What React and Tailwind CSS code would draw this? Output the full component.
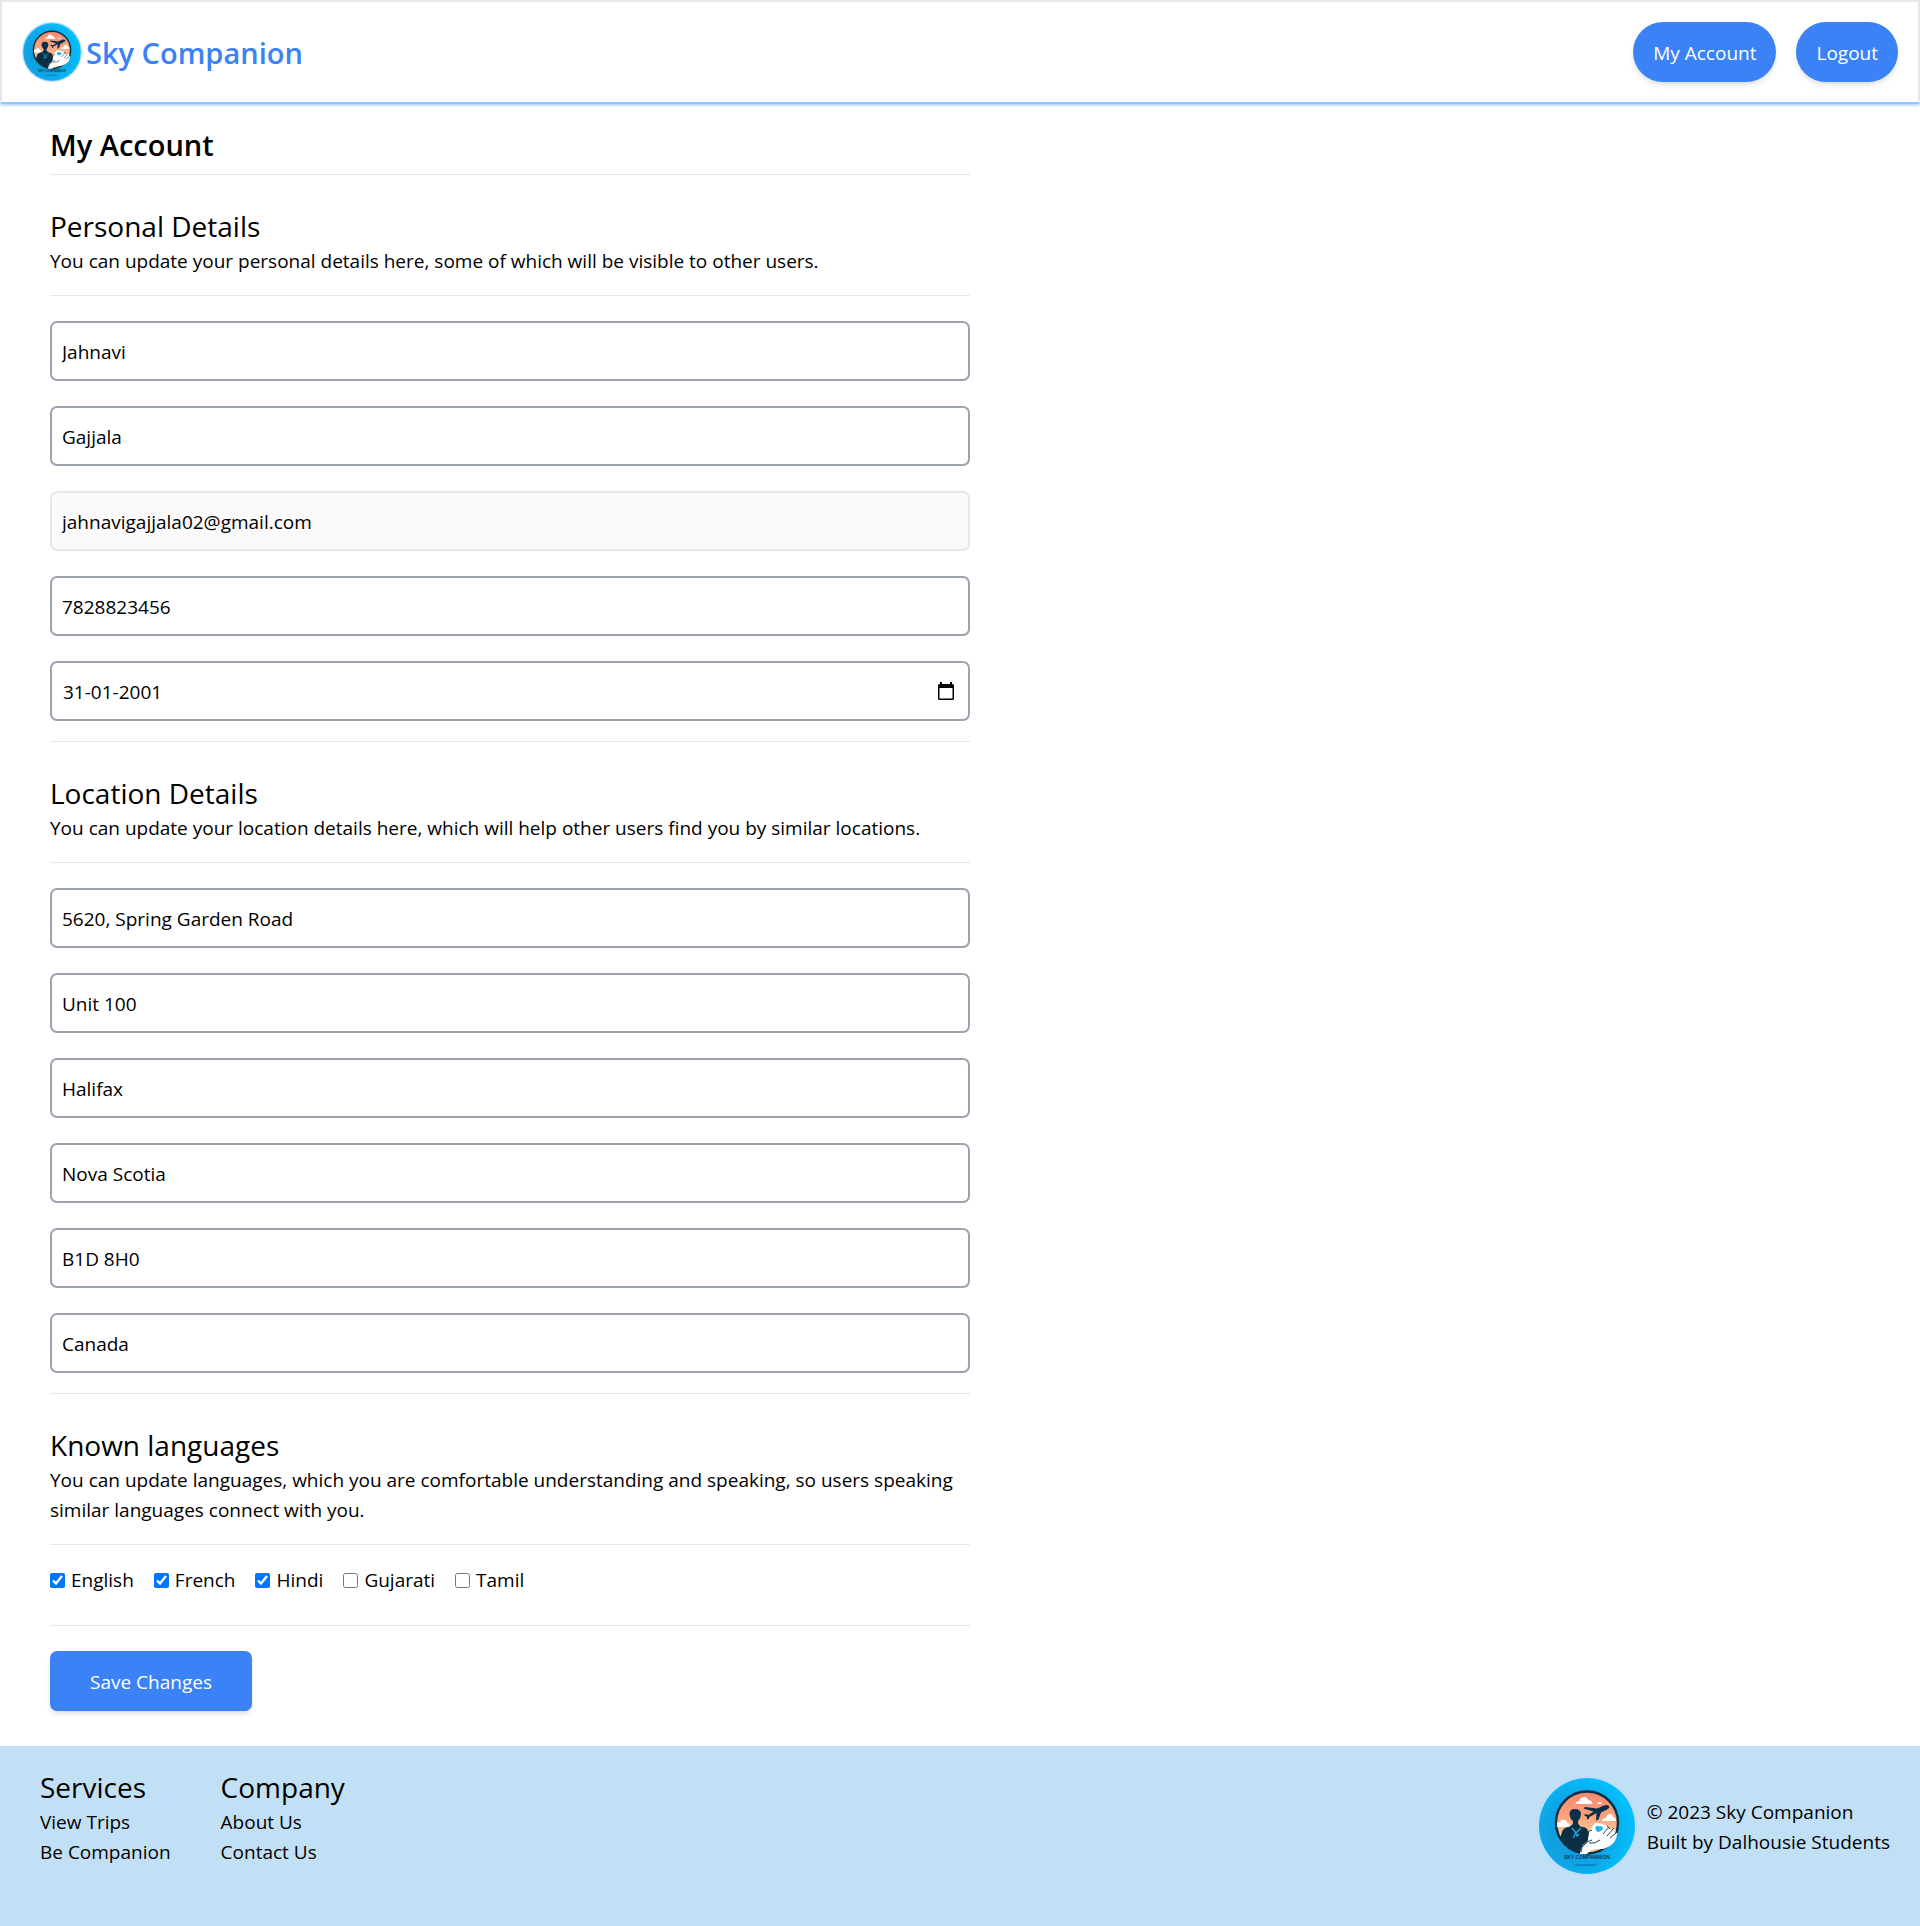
import React from "react";

function Logo({ className }) {
  return (
    <svg viewBox="0 0 100 100" className={className} role="img" aria-label="Sky Companion logo">
      <defs>
        <radialGradient id="sky" cx="38%" cy="56%" r="60%">
          <stop offset="0%" stopColor="#1492cf" />
          <stop offset="60%" stopColor="#0fa6e6" />
          <stop offset="100%" stopColor="#03bffd" />
        </radialGradient>
        <linearGradient id="dusk" x1="0" y1="0" x2="0" y2="1">
          <stop offset="0%" stopColor="#f78673" />
          <stop offset="40%" stopColor="#faa27c" />
          <stop offset="75%" stopColor="#fbcf98" />
        </linearGradient>
        <clipPath id="disc">
          <circle cx="50" cy="46.500" r="31" />
        </clipPath>
      </defs>
      <circle cx="50" cy="50" r="50" fill="#bfdbfe" />
      <circle cx="50" cy="50" r="48" fill="url(#sky)" />
      <circle cx="50" cy="46.500" r="31" fill="url(#dusk)" stroke="#0b2f45" strokeWidth="2.400" />
      <g clipPath="url(#disc)">
        <path d="M38.500 28q0-3 4-3 1-4 4.500-4t4 3q4 0 4.500 4zM60 28q1-2 2.500-2t2.500 2z" fill="#fff" />
        <path d="M20 51v-4q2-1 3-1 1-3 4-2 3 0 3 3 3 0 3 4z" fill="#fff" />
        <path d="M65 45q0-3 4-3 1-4 4-4t3 3q3 1 3 4z" fill="#fff" />
        <path d="M18 80l7-24q1-4 6-5 4-1 5-4v-2q-3-2-3.500-7 0-5 5.500-5t6 5q-.5 5-3 7v2q1 3 4 4 5 0 6 4l1 6-7 20z" fill="#0b2f45" />
        <path d="M35 52l4 5 5-5M39 57l1 3 2-2M38.500 57l-2 5" stroke="#2ba9de" strokeWidth="1.300" fill="none" />
      </g>
      <path
        d="M72 30q1 1.500-1 3l-7 3.500-2.500 7-2.500 1 .5-7.500-7 4-1 2-1.500.5v-2.500l-3-2 2-1 2.500 1 5-3.500-10-3 1.500-1.500 12 1.500 7-3q3-1 5 .5z"
        fill="#0b2f45"
      />
      <path
        d="M43 78q0-5 3-9 5-5 12-7l9-4q5-3 9-5 4 0 2 4 3-1 2 2-1 8-9 12-5 3-12 2-5 0-9 5z"
        fill="#fff"
      />
      <path d="M51 63l1-8 6-8q8 0 12 3l5 5-7 6-8 3-8 3z" fill="#fff" />
      <path d="M66 58l6-7M70 60l7-8M73 62l6-5M52 67q6 1 11-3M70 50l3 3" stroke="#0b2f45" strokeWidth=".9" fill="none" />
      <path d="M50 63l2-8 3-1M44 76q0-5 4-8 3-3 7-4" stroke="#0b2f45" strokeWidth=".9" fill="none" />
      <path d="M58.500 51q2-2 4-.5 3-1 3.500 1.500-.5 3-5 4-3.500-2-2.500-5z" fill="#25b4e8" />
      <text x="50" y="82.500" textAnchor="middle" fontFamily="Liberation Sans, sans-serif" fontWeight="700" fontSize="5" fill="#0b3f5c">
        SKY COMPANNION
      </text>
      <ellipse cx="49" cy="89" rx="12" ry="1" fill="#0a86bf" />
    </svg>
  );
}

function Divider() {
  return <hr className="border-gray-200" />;
}

function Section({ title, text, children }) {
  return (
    <section>
      <div className="pt-[31px] pb-[19px]">
        <h2 className="text-[28px] leading-10">{title}</h2>
        <p className="leading-[30px]">{text}</p>
      </div>
      <Divider />
      {children}
      <Divider />
    </section>
  );
}

const fieldBase = "block h-[60px] w-full rounded-[7px] border-2 px-2.5 pt-0.5 ";

function Field({ label, value, disabled }) {
  return (
    <input
      type="text"
      aria-label={label}
      defaultValue={value}
      disabled={disabled}
      className={fieldBase + (disabled ? "border-[#e5e7eb] bg-[#fafafa]" : "border-[#9ca3af] bg-white")}
    />
  );
}

function DateField({ label, value }) {
  return (
    <div className={fieldBase + "flex items-center border-[#9ca3af] bg-white"}>
      <input type="text" aria-label={label} defaultValue={value} className="min-w-0 flex-1 pl-px outline-none" />
      <button type="button" aria-label="Open calendar" className="mr-1 pb-0.5">
        <svg viewBox="0 0 16 18" className="h-[18px] w-4">
          <path d="M2 0h2v2h8V0h2v2h.5A1.500 1.500 0 0 1 16 3.500v13a1.500 1.500 0 0 1-1.500 1.500h-13A1.500 1.500 0 0 1 0 16.500v-13A1.500 1.500 0 0 1 1.500 2H2zM1.500 6v10.500h13V6z" fill="#000" />
        </svg>
      </button>
    </div>
  );
}

const languages = [
  ["English", true],
  ["French", true],
  ["Hindi", true],
  ["Gujarati", false],
  ["Tamil", false],
];

export default function App() {
  return (
    <div className="bg-white font-['Open_Sans','Noto_Sans',sans-serif] text-[19px] leading-[30px] text-black">
      <header className="flex items-center justify-between border-2 border-gray-200 border-b-blue-300 p-5 shadow-[0_1px_3px_0_#93c5fd]">
        <a href="#home" className="flex items-center gap-1">
          <Logo className="size-[60px]" />
          <span className="pt-0.5 text-[29px] leading-10 font-semibold text-[#3b82f6]">Sky Companion</span>
        </a>
        <nav className="flex gap-5">
          <button type="button" className="h-[60px] rounded-full bg-[#3b82f6] px-5 pt-0.5 text-white shadow-md">My Account</button>
          <button type="button" className="h-[60px] rounded-full bg-[#3b82f6] px-5 pt-0.5 text-white shadow-md">Logout</button>
        </nav>
      </header>

      <main className="pt-[21px] pr-[30px] pb-[35px] pl-[50px]">
        <form className="w-1/2">
          <h1 className="pb-[9px] text-[29px] leading-10 font-semibold">My Account</h1>
          <Divider />
          <Section
            title="Personal Details"
            text="You can update your personal details here, some of which will be visible to other users."
          >
            <div className="flex flex-col gap-[25px] pt-[25px] pb-5">
              <Field label="First name" value="Jahnavi" />
              <Field label="Last name" value="Gajjala" />
              <Field label="Email" value="jahnavigajjala02@gmail.com" disabled />
              <Field label="Phone" value="7828823456" />
              <DateField label="Date of birth" value="31-01-2001" />
            </div>
          </Section>
          <Section
            title="Location Details"
            text="You can update your location details here, which will help other users find you by similar locations."
          >
            <div className="flex flex-col gap-[25px] pt-[25px] pb-5">
              <Field label="Address" value="5620, Spring Garden Road" />
              <Field label="Unit" value="Unit 100" />
              <Field label="City" value="Halifax" />
              <Field label="Province" value="Nova Scotia" />
              <Field label="Postal code" value="B1D 8H0" />
              <Field label="Country" value="Canada" />
            </div>
          </Section>
          <Section
            title="Known languages"
            text="You can update languages, which you are comfortable understanding and speaking, so users speaking similar languages connect with you."
          >
            <div className="flex gap-5 pt-5 pb-[30px]">
              {languages.map(([name, checked]) => (
                <label key={name} className="flex items-center gap-1.5">
                  <input type="checkbox" defaultChecked={checked} className="size-[15px]" />
                  {name}
                </label>
              ))}
            </div>
          </Section>
          <button type="button" className="mt-[25px] block h-[60px] rounded-[7px] bg-[#3b82f6] px-10 pt-0.5 text-white shadow-md">
            Save Changes
          </button>
        </form>
      </main>

      <footer className="flex items-start justify-between bg-[#c2e0f5] pr-[30px] pb-[50px] pl-10">
        <div className="flex gap-[50px] pt-[21px]">
          <div className="flex flex-col">
            <h2 className="text-[28px] leading-10">Services</h2>
            <a href="#trips">View Trips</a>
            <a href="#companion">Be Companion</a>
          </div>
          <div className="flex flex-col">
            <h2 className="text-[28px] leading-10">Company</h2>
            <a href="#about">About Us</a>
            <a href="#contact">Contact Us</a>
          </div>
        </div>
        <div className="flex items-center gap-2.5 pt-[30px]">
          <Logo className="size-[100px]" />
          <p className="pt-0.5">
            © 2023 Sky Companion
            <br />
            Built by Dalhousie Students
          </p>
        </div>
      </footer>
    </div>
  );
}
